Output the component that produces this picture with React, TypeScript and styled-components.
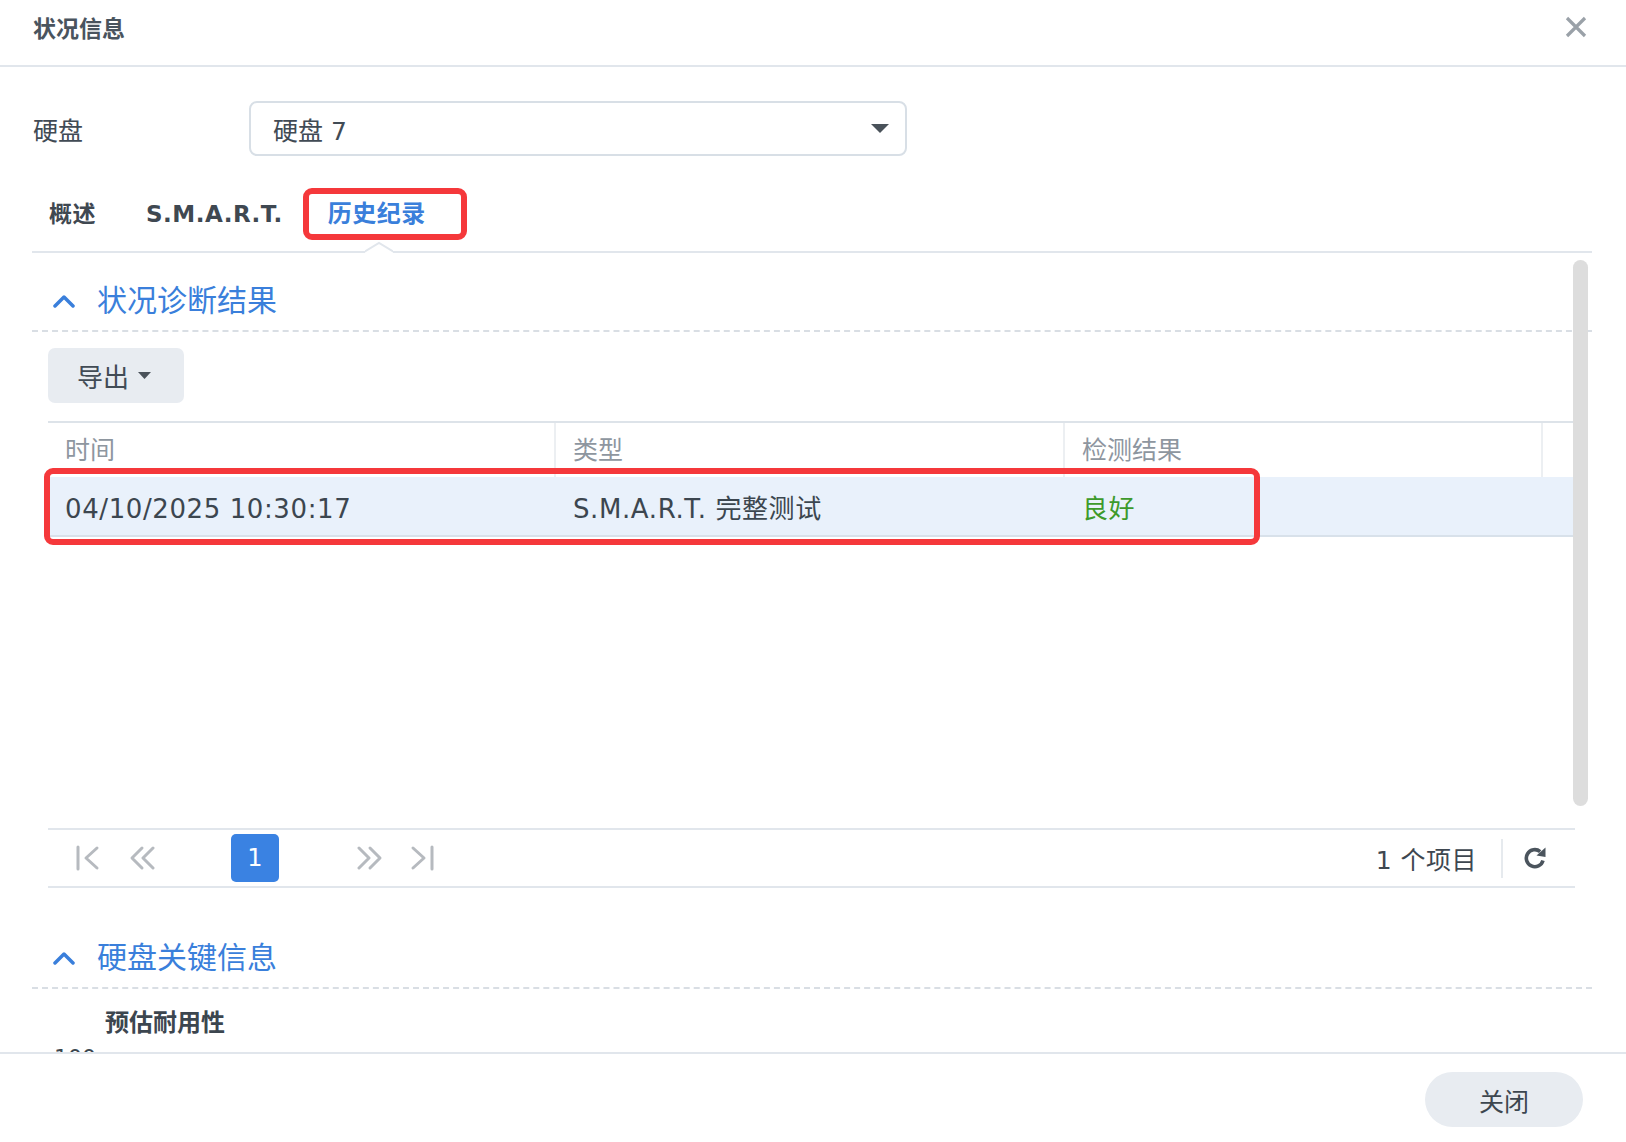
import React from "react";
import styled, { createGlobalStyle } from "styled-components";

const Colors = {
  text: "#414b55",
  muted: "#8e969f",
  blue: "#3a7fdb",
  line: "#e1e6ec",
  dash: "#d9dee4",
  red: "#f5383b",
  green: "#3d9a2b",
  rowBg: "#e9f1fb",
  btnBg: "#e8ecf1",
  icon: "#b6babf",
};

const GlobalStyle = createGlobalStyle`
  html, body {
    margin: 0;
    padding: 0;
    background: #ffffff;
  }
  body {
    font-family: "DejaVu Sans", "Noto Sans CJK SC", sans-serif;
    color: ${Colors.text};
  }
  * { box-sizing: border-box; }
`;

const Dialog = styled.div`
  width: 1626px;
  height: 1142px;
  display: flex;
  flex-direction: column;
  overflow: hidden;
  background: #fff;
`;

const Header = styled.div`
  flex-shrink: 0;
  height: 67px;
  padding: 0 39px 11px 33px;
  border-bottom: 2px solid ${Colors.line};
  display: flex;
  align-items: center;
  justify-content: space-between;
`;

const Title = styled.div`
  font-size: 23px;
  font-weight: bold;
  color: #4a545e;
`;

const CloseIcon = styled.svg`
  width: 22px;
  height: 22px;
  display: block;
`;

const Main = styled.div`
  flex: 1;
  min-height: 0;
  display: flex;
  flex-direction: column;
  padding: 0 34px 0 32px;
`;

const DiskRow = styled.div`
  margin-top: 34px;
  height: 55px;
  display: flex;
  align-items: center;
`;

const FieldLabel = styled.div`
  width: 217px;
  padding-left: 1px;
  font-size: 25px;
`;

const Select = styled.div`
  width: 658px;
  height: 55px;
  border: 2px solid #d8dfe6;
  border-radius: 8px;
  padding: 0 16px 0 22px;
  display: flex;
  align-items: center;
  justify-content: space-between;
  font-size: 25px;
`;

const TabBar = styled.div`
  margin-top: 32px;
  padding-bottom: 11px;
  border-bottom: 2px solid ${Colors.line};
`;

const TabList = styled.div`
  display: flex;
  margin-left: -8px;
`;

const Tab = styled.div<{ $active?: boolean }>`
  position: relative;
  height: 52px;
  line-height: 52px;
  padding: 0 25px;
  margin-left: ${(p) => (p.$active ? -5 : 0)}px;
  font-size: ${(p) => (p.$active ? 24 : 23)}px;
  font-weight: bold;
  letter-spacing: 0.5px;
  color: ${(p) => (p.$active ? Colors.blue : "#3f4851")};
`;

const MarkBox = styled.div<{ $radius: number }>`
  position: absolute;
  border: 6px solid ${Colors.red};
  border-radius: ${(p) => p.$radius}px;
  pointer-events: none;
`;

const TabMark = styled(MarkBox)`
  inset: 0 -16px 0 0;
`;

const Notch = styled.svg`
  position: absolute;
  left: 62px;
  top: 53px;
  width: 28px;
  height: 14px;
`;

const Content = styled.div`
  position: relative;
  flex: 1;
  min-height: 0;
  overflow: hidden;
`;

const ScrollThumb = styled.div`
  position: absolute;
  top: 7px;
  right: 4px;
  width: 15px;
  height: 546px;
  border-radius: 8px;
  background: #dddddd;
`;

const SectionHeader = styled.div<{ $top: number }>`
  display: flex;
  align-items: center;
  gap: 22px;
  padding: ${(p) => p.$top}px 0 11px 21px;
  border-bottom: 2px dashed ${Colors.dash};
`;

const SectionTitle = styled.div`
  font-size: 30px;
  line-height: 36px;
  color: ${Colors.blue};
`;

const SectionBody = styled.div`
  padding: 0 17px 0 16px;
`;

const Toolbar = styled.div`
  padding-top: 16px;
  display: flex;
`;

const ExportButton = styled.div`
  width: 136px;
  height: 55px;
  border-radius: 7px;
  background: ${Colors.btnBg};
  display: flex;
  align-items: center;
  gap: 9px;
  padding-left: 29px;
  font-size: 26px;
`;

const Table = styled.div`
  margin-top: 18px;
  border-top: 2px solid #dde3e9;
`;

const Row = styled.div<{ $head?: boolean }>`
  position: relative;
  display: grid;
  grid-template-columns: 508px 509px 478px 1fr;
  height: ${(p) => (p.$head ? 54 : 60)}px;
  background: ${(p) => (p.$head ? "#fff" : Colors.rowBg)};
  border-bottom: ${(p) => (p.$head ? "none" : "2px solid #d8e1ea")};
`;

const Cell = styled.div<{ $head?: boolean; $color?: string }>`
  display: flex;
  align-items: center;
  padding: ${(p) => (p.$head ? "2px 0 0 17px" : "6px 0 0 17px")};
  font-size: ${(p) => (p.$head ? 25 : 26)}px;
  line-height: 30px;
  letter-spacing: ${(p) => (p.$head ? 0 : 0.6)}px;
  color: ${(p) => p.$color ?? (p.$head ? Colors.muted : "#3c464f")};
  border-right: ${(p) => (p.$head ? "2px solid #eceff2" : "none")};
  &:last-child {
    border-right: none;
  }
`;

const RowMark = styled(MarkBox)`
  left: -4px;
  right: 315px;
  top: -9px;
  bottom: -10px;
`;

const TableFiller = styled.div`
  height: 291px;
`;

const Pager = styled.div`
  height: 60px;
  border-top: 2px solid ${Colors.line};
  border-bottom: 2px solid ${Colors.line};
  display: flex;
  align-items: center;
  padding-right: 28px;
`;

const PagerIcon = styled.svg<{ $ml: number }>`
  width: 26px;
  height: 26px;
  margin-left: ${(p) => p.$ml}px;
  display: block;
`;

const PageButton = styled.div<{ $ml: number }>`
  margin-left: ${(p) => p.$ml}px;
  width: 48px;
  height: 48px;
  border-radius: 5px;
  background: #3a82e2;
  color: #fff;
  font-size: 24px;
  display: flex;
  align-items: center;
  justify-content: center;
`;

const PagerInfo = styled.div`
  margin-left: auto;
  font-size: 25px;
  letter-spacing: 0.5px;
  color: #3e4750;
`;

const PagerDivider = styled.div`
  width: 2px;
  height: 39px;
  background: #e6eaee;
  margin: 0 20px 0 24px;
`;

const DurabilityRow = styled.div`
  display: flex;
  padding: 20px 0 0 6px;
`;

const GaugeValue = styled.div`
  width: 51px;
  padding-top: 36px;
  font-size: 22px;
  color: #3c464f;
`;

const SubTitle = styled.div`
  font-size: 24px;
  font-weight: bold;
  color: #3c464f;
  line-height: 28px;
`;

const Footer = styled.div`
  flex-shrink: 0;
  height: 90px;
  border-top: 2px solid ${Colors.line};
  padding: 18px 43px 0 0;
  display: flex;
  justify-content: flex-end;
  align-items: flex-start;
`;

const CloseButton = styled.div`
  width: 158px;
  height: 55px;
  border-radius: 28px;
  background: ${Colors.btnBg};
  display: flex;
  align-items: center;
  justify-content: center;
  font-size: 25px;
  color: #3c464f;
`;

const Caret = ({ w, h }: { w: number; h: number }) => (
  <svg width={w} height={h} viewBox={`0 0 ${w} ${h}`} style={{ display: "block" }}>
    <polygon points={`0,0 ${w},0 ${w / 2},${h}`} fill="#4a525a" />
  </svg>
);

const ChevronUp = () => (
  <svg width="22" height="14" viewBox="0 0 22 14" style={{ display: "block" }}>
    <polyline
      points="2,12 11,3 20,12"
      fill="none"
      stroke={Colors.blue}
      strokeWidth="3.5"
      strokeLinecap="round"
      strokeLinejoin="round"
    />
  </svg>
);

const strokeProps = {
  fill: "none",
  stroke: Colors.icon,
  strokeWidth: 3,
  strokeLinecap: "round" as const,
  strokeLinejoin: "round" as const,
};

export default function App() {
  return (
    <Dialog>
      <GlobalStyle />
      <Header>
        <Title>状况信息</Title>
        <CloseIcon viewBox="0 0 22 22">
          <path d="M2 2 L20 20 M20 2 L2 20" stroke="#9aa1a8" strokeWidth="3.2" />
        </CloseIcon>
      </Header>

      <Main>
        <DiskRow>
          <FieldLabel>硬盘</FieldLabel>
          <Select>
            <span>硬盘 7</span>
            <Caret w={18} h={9} />
          </Select>
        </DiskRow>

        <TabBar>
          <TabList>
            <Tab>概述</Tab>
            <Tab>S.M.A.R.T.</Tab>
            <Tab $active>
              历史纪录
              <TabMark $radius={9} />
              <Notch viewBox="0 0 28 14">
                <polygon points="0,11 14,2 28,11 28,14 0,14" fill="#fff" />
                <polyline points="-1,11 14,2 29,11" fill="none" stroke={Colors.line} strokeWidth="2" />
              </Notch>
            </Tab>
          </TabList>
        </TabBar>

        <Content>
          <SectionHeader $top={30}>
            <ChevronUp />
            <SectionTitle>状况诊断结果</SectionTitle>
          </SectionHeader>
          <SectionBody>
            <Toolbar>
              <ExportButton>
                导出
                <Caret w={13} h={7} />
              </ExportButton>
            </Toolbar>

            <Table>
              <Row $head>
                <Cell $head>时间</Cell>
                <Cell $head>类型</Cell>
                <Cell $head>检测结果</Cell>
                <Cell $head />
              </Row>
              <Row>
                <Cell>04/10/2025 10:30:17</Cell>
                <Cell>S.M.A.R.T. 完整测试</Cell>
                <Cell $color={Colors.green}>良好</Cell>
                <Cell />
                <RowMark $radius={9} />
              </Row>
              <TableFiller />
            </Table>

            <Pager>
              <PagerIcon $ml={27} viewBox="0 0 26 26">
                <line x1="3" y1="2" x2="3" y2="24" {...strokeProps} />
                <polyline points="22,3 11,13 22,23" {...strokeProps} />
              </PagerIcon>
              <PagerIcon $ml={28} viewBox="0 0 26 26">
                <polyline points="13,3 3,13 13,23" {...strokeProps} />
                <polyline points="24,3 14,13 24,23" {...strokeProps} />
              </PagerIcon>
              <PageButton $ml={76}>1</PageButton>
              <PagerIcon $ml={78} viewBox="0 0 26 26">
                <polyline points="2,3 12,13 2,23" {...strokeProps} />
                <polyline points="13,3 23,13 13,23" {...strokeProps} />
              </PagerIcon>
              <PagerIcon $ml={26} viewBox="0 0 26 26">
                <polyline points="4,3 15,13 4,23" {...strokeProps} />
                <line x1="23" y1="2" x2="23" y2="24" {...strokeProps} />
              </PagerIcon>
              <PagerInfo>1 个项目</PagerInfo>
              <PagerDivider />
              <svg width="24" height="24" viewBox="0 0 24 24" style={{ display: "block" }}>
                <path
                  d="M20 14.5 A8.5 8.5 0 1 1 17.2 5.6"
                  fill="none"
                  stroke="#4b545d"
                  strokeWidth="3.6"
                />
                <polygon points="22.5,1.5 22.5,11 13.5,9.5" fill="#4b545d" />
              </svg>
            </Pager>
          </SectionBody>

          <SectionHeader $top={52}>
            <ChevronUp />
            <SectionTitle>硬盘关键信息</SectionTitle>
          </SectionHeader>
          <SectionBody>
            <DurabilityRow>
              <GaugeValue>100</GaugeValue>
              <SubTitle>预估耐用性</SubTitle>
            </DurabilityRow>
          </SectionBody>

          <ScrollThumb />
        </Content>
      </Main>

      <Footer>
        <CloseButton>关闭</CloseButton>
      </Footer>
    </Dialog>
  );
}
